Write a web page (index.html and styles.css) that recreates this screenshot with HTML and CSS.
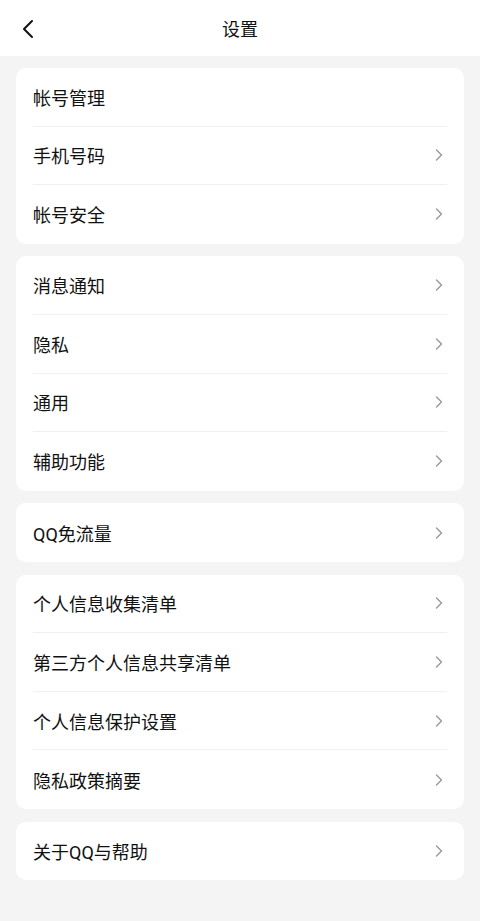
FILE: index.html
```html
<!DOCTYPE html>
<html lang="zh-CN">
<head>
    <meta charset="UTF-8">
    <meta name="viewport" content="width=device-width, initial-scale=1.0">
    <title>设置</title>
    <link rel="stylesheet" href="styles.css">
</head>
<body>
    <div class="header">
        <svg class="back" viewBox="0 0 14 20" width="14" height="20">
            <path d="M11 2 L3 10 L11 18" />
        </svg>
        <h1>设置</h1>
    </div>

    <div class="content">
        <div class="card">
            <div class="row"><span>帐号管理</span></div>
            <div class="row"><span>手机号码</span><svg class="arrow" viewBox="0 0 8 12"><path d="M1.5 1 L6.5 6 L1.5 11" /></svg></div>
            <div class="row"><span>帐号安全</span><svg class="arrow" viewBox="0 0 8 12"><path d="M1.5 1 L6.5 6 L1.5 11" /></svg></div>
        </div>

        <div class="card">
            <div class="row"><span>消息通知</span><svg class="arrow" viewBox="0 0 8 12"><path d="M1.5 1 L6.5 6 L1.5 11" /></svg></div>
            <div class="row"><span>隐私</span><svg class="arrow" viewBox="0 0 8 12"><path d="M1.5 1 L6.5 6 L1.5 11" /></svg></div>
            <div class="row"><span>通用</span><svg class="arrow" viewBox="0 0 8 12"><path d="M1.5 1 L6.5 6 L1.5 11" /></svg></div>
            <div class="row"><span>辅助功能</span><svg class="arrow" viewBox="0 0 8 12"><path d="M1.5 1 L6.5 6 L1.5 11" /></svg></div>
        </div>

        <div class="card">
            <div class="row"><span>QQ免流量</span><svg class="arrow" viewBox="0 0 8 12"><path d="M1.5 1 L6.5 6 L1.5 11" /></svg></div>
        </div>

        <div class="card">
            <div class="row"><span>个人信息收集清单</span><svg class="arrow" viewBox="0 0 8 12"><path d="M1.5 1 L6.5 6 L1.5 11" /></svg></div>
            <div class="row"><span>第三方个人信息共享清单</span><svg class="arrow" viewBox="0 0 8 12"><path d="M1.5 1 L6.5 6 L1.5 11" /></svg></div>
            <div class="row"><span>个人信息保护设置</span><svg class="arrow" viewBox="0 0 8 12"><path d="M1.5 1 L6.5 6 L1.5 11" /></svg></div>
            <div class="row"><span>隐私政策摘要</span><svg class="arrow" viewBox="0 0 8 12"><path d="M1.5 1 L6.5 6 L1.5 11" /></svg></div>
        </div>

        <div class="card">
            <div class="row"><span>关于QQ与帮助</span><svg class="arrow" viewBox="0 0 8 12"><path d="M1.5 1 L6.5 6 L1.5 11" /></svg></div>
        </div>
    </div>
</body>
</html>
```

FILE: styles.css
```css
body {
    margin: 0;
    padding: 0;
    background-color: #f4f4f4;
    font-family: Roboto, "Noto Sans CJK SC", sans-serif;
    color: #111;
    min-height: 921px;
}
.header {
    height: 56px;
    background: #fff;
    display: flex;
    align-items: center;
    justify-content: center;
    position: relative;
}
.header h1 {
    margin: 0;
    font-size: 18px;
    font-weight: 400;
    color: #111;
}
.back {
    position: absolute;
    left: 21px;
    top: 19px;
}
.back path {
    fill: none;
    stroke: #111;
    stroke-width: 2;
    stroke-linecap: round;
    stroke-linejoin: round;
}
.content {
    padding: 12px 16px;
    display: flex;
    flex-direction: column;
    gap: 12.6px;
}
.card {
    background: #fff;
    border-radius: 10px;
    padding: 0 17px;
}
.row {
    height: 58.6px;
    box-sizing: border-box;
    display: flex;
    align-items: center;
    justify-content: space-between;
    font-size: 18px;
    border-bottom: 1px solid #f0f0f0;
}
.row:last-child {
    border-bottom: none;
}
.arrow {
    width: 8px;
    height: 12px;
    margin-right: 4px;
}
.arrow path {
    fill: none;
    stroke: #999;
    stroke-width: 1.4;
    stroke-linecap: round;
    stroke-linejoin: round;
}
```
